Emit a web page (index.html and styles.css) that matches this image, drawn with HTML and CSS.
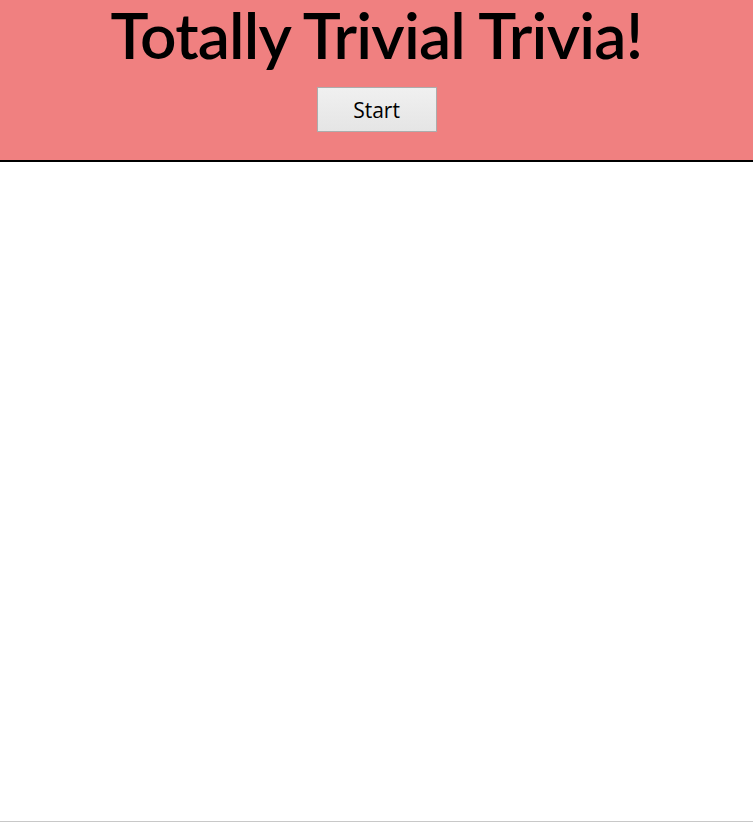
FILE: index.html
```html
<!DOCTYPE html>
<html lang="en">
<head>
<meta charset="utf-8">
<title>Totally Trivial Trivia!</title>
<link rel="stylesheet" href="styles.css">
</head>
<body>
<div class="app">
  <header class="header">
    <h1 class="title">Totally Trivial Trivia!</h1>
    <button class="start-btn" type="button">Start</button>
  </header>
  <main class="content"></main>
</div>
</body>
</html>
```
FILE: styles.css
```css
html, body {
  margin: 0;
  padding: 0;
  height: 100%;
  background: #ffffff;
}
.app {
  height: 822px;
  box-sizing: border-box;
  border-bottom: 1px solid #c8c8c8;
  display: flex;
  flex-direction: column;
  font-family: "Open Sans", "Noto Sans", sans-serif;
}
.header {
  background: #f08080;
  border-bottom: 2px solid #000000;
  height: 160px;
  display: flex;
  flex-direction: column;
  align-items: center;
  flex: none;
}
.title {
  margin: 0;
  font-family: "Lato", "Open Sans", sans-serif;
  font-size: 64px;
  line-height: 70px;
  font-weight: 600;
  letter-spacing: -0.8px;
  color: #000000;
}
.start-btn {
  margin-top: 17px;
  width: 120px;
  height: 45px;
  box-sizing: border-box;
  border: 1px solid #acacac;
  border-radius: 0;
  background: linear-gradient(#f0f0f0, #e5e5e5);
  font-family: "Open Sans", "Noto Sans", sans-serif;
  font-size: 21px;
  color: #000000;
  padding: 0;
}
.content {
  flex: 1;
}
```
